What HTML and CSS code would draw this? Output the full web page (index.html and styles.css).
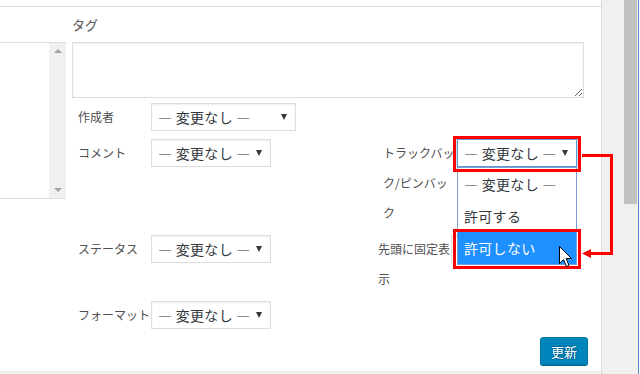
FILE: index.html
```html
<!DOCTYPE html>
<html lang="ja">
<head>
    <meta charset="UTF-8">
    <meta name="viewport" content="width=device-width, initial-scale=1.0">
    <title>一括編集</title>
    <link rel="stylesheet" href="styles.css">
</head>
<body>
<div class="screen">
    <div class="main">
        <div class="topbar"></div>
        <div class="panel">
            <div class="cats">
                <div class="cats-list"></div>
                <div class="cats-scroll">
                    <span class="arr-up"></span>
                    <span class="arr-down"></span>
                </div>
            </div>
            <div class="edit">
                <div class="tag-title">タグ</div>
                <textarea class="tags"></textarea>
                <div class="fields">
                    <div class="group">
                        <label class="field"><span class="title">作成者</span><span class="select wide">— 変更なし —<i class="caret"></i></span></label>
                    </div>
                    <div class="group">
                        <label class="field left"><span class="title">コメント</span><span class="select">— 変更なし —<i class="caret"></i></span></label>
                        <label class="field ping"><span class="title">トラックバック/ピンバック</span><span class="select focus">— 変更なし —<i class="caret"></i></span></label>
                    </div>
                    <div class="group">
                        <label class="field left short"><span class="title">ステータス</span><span class="select">— 変更なし —<i class="caret"></i></span></label>
                        <label class="field"><span class="title">先頭に固定表示</span><span class="select hidden-under"><i class="caret"></i></span></label>
                    </div>
                    <div class="group">
                        <label class="field"><span class="title">フォーマット</span><span class="select">— 変更なし —<i class="caret"></i></span></label>
                    </div>
                </div>
                <div class="submit"><button type="button" class="btn-primary">更新</button></div>
            </div>
        </div>
        <div class="bottombar"></div>
    </div>
    <div class="sidebar"><div class="thumb"></div></div>

    <!-- open dropdown of the trackback select -->
    <ul class="dropdown">
        <li>— 変更なし —</li>
        <li>許可する</li>
        <li class="hover">許可しない</li>
    </ul>

    <!-- annotation -->
    <div class="mark mark-top"></div>
    <div class="mark mark-bottom"></div>
    <svg class="connector" width="40" height="110" viewBox="0 0 40 110">
        <polyline points="6,5.5 35.5,5.5 35.5,103.5 14,103.5" fill="none" stroke="#ff0000" stroke-width="3"/>
        <polygon points="6,103.5 15,99 15,108" fill="#ff0000"/>
    </svg>
    <svg class="cursor" width="14" height="22" viewBox="0 0 14 22">
        <path d="M0.5 0.5 V17.5 L4.5 13.5 L7.5 20.5 L10 19.5 L7.2 12.5 H12.5 Z" fill="#fff" stroke="#000" stroke-width="1" stroke-linejoin="miter"/>
    </svg>
</div>
</body>
</html>
```

FILE: styles.css
```css
*{box-sizing: border-box;}
body{margin: 0;font-family: "Noto Sans CJK JP", "Liberation Sans", sans-serif;background: #fff;}

.screen{position: relative;display: flex;width: 640px;height: 374px;overflow: hidden;background: #fff;}

/* page area */
.main{display: flex;flex-direction: column;width: 602px;height: 374px;border-right: 1px solid #ddd;background: #fff;}
.topbar{height: 7px;border-bottom: 1px solid #ddd;}
.panel{display: flex;align-items: flex-start;flex: 1;}
.bottombar{height: 3px;background: #f1f1f1;}

/* window scrollbar on the right */
.sidebar{position: relative;width: 37px;height: 374px;background: #f0f0f0;border-right: 1px solid #4a90d0;}
.thumb{position: absolute;left: 22px;top: 0;width: 13px;height: 204px;background: #c1c1c1;}

/* category box (cut off on the left) */
.cats{display: flex;width: 66px;height: 157px;margin-top: 35px;border-top: 1px solid #ddd;border-bottom: 1px solid #ddd;}
.cats-list{flex: 1;}
.cats-scroll{display: flex;flex-direction: column;justify-content: space-between;align-items: center;width: 17px;padding: 6px 0 6px;background: #f0f0f0;}
.arr-up{width: 0;height: 0;border-left: 4px solid transparent;border-right: 4px solid transparent;border-bottom: 4px solid #a3a3a3;}
.arr-down{width: 0;height: 0;border-left: 4px solid transparent;border-right: 4px solid transparent;border-top: 4px solid #a3a3a3;}

/* edit column */
.edit{width: 516px;margin-left: 6px;}
.tag-title{padding-top: 8px;line-height: 20px;font-size: 13px;color: #555;}
.tags{display: block;width: 512px;height: 56px;margin: 7px 0 0;padding: 2px 6px;border: 1px solid #ddd;box-shadow: inset 0 1px 2px rgba(0,0,0,.07);font: 14px "Noto Sans CJK JP", sans-serif;resize: both;outline: none;}

.fields{margin-top: 4px;padding-left: 6px;}
.group{display: flex;align-items: flex-start;}
.group + .group{margin-top: 6px;}
.field{display: flex;align-items: flex-start;}
.field.left{width: 305px;}
.field.short{width: 300px;}
.title{width: 73px;font-size: 12px;line-height: 30px;color: #4f4f4f;}
.ping .title{width: 74px;}

.select{display: flex;align-items: center;justify-content: space-between;width: 120px;height: 28px;margin-top: 1px;padding: 0 8px 0 6px;border: 1px solid #ddd;background: #fff;box-shadow: inset 0 1px 2px rgba(0,0,0,.07);font-size: 14px;color: #32373c;white-space: nowrap;letter-spacing: .3px;}
.select.wide{width: 145px;}
.select.focus{border-color: #5b9dd9;box-shadow: 0 0 2px rgba(30,140,190,.8);}
.select.hidden-under{justify-content: flex-end;}
.caret{display: block;width: 0;height: 0;border-left: 3px solid transparent;border-right: 3px solid transparent;border-top: 6px solid #32373c;}

.submit{display: flex;justify-content: flex-end;margin-top: 7px;}
.btn-primary{height: 28px;padding: 0 10px;border: 1px solid #0073aa;border-radius: 3px;background: #0085ba;box-shadow: 0 1px 0 #006799;color: #fff;font: 13px "Noto Sans CJK JP", sans-serif;text-shadow: 0 -1px 1px #006799, 1px 0 1px #006799, 0 1px 1px #006799, -1px 0 1px #006799;}

/* overlays */
.dropdown{position: absolute;left: 457px;top: 167px;width: 120px;margin: 0;padding: 0;list-style: none;border: 1px solid #7f9dd3;background: #fff;font-size: 14px;color: #32373c;letter-spacing: .3px;}
.dropdown li{height: 32px;line-height: 32px;padding-left: 6px;white-space: nowrap;}
.dropdown li.hover{background: #1e90ff;color: #fff;}

.mark{position: absolute;left: 453px;width: 128px;border: 3px solid #ff0000;}
.mark-top{top: 136px;height: 36px;}
.mark-bottom{top: 229px;height: 40px;}
.connector{position: absolute;left: 576px;top: 150px;}
.cursor{position: absolute;left: 559px;top: 246px;}
```
